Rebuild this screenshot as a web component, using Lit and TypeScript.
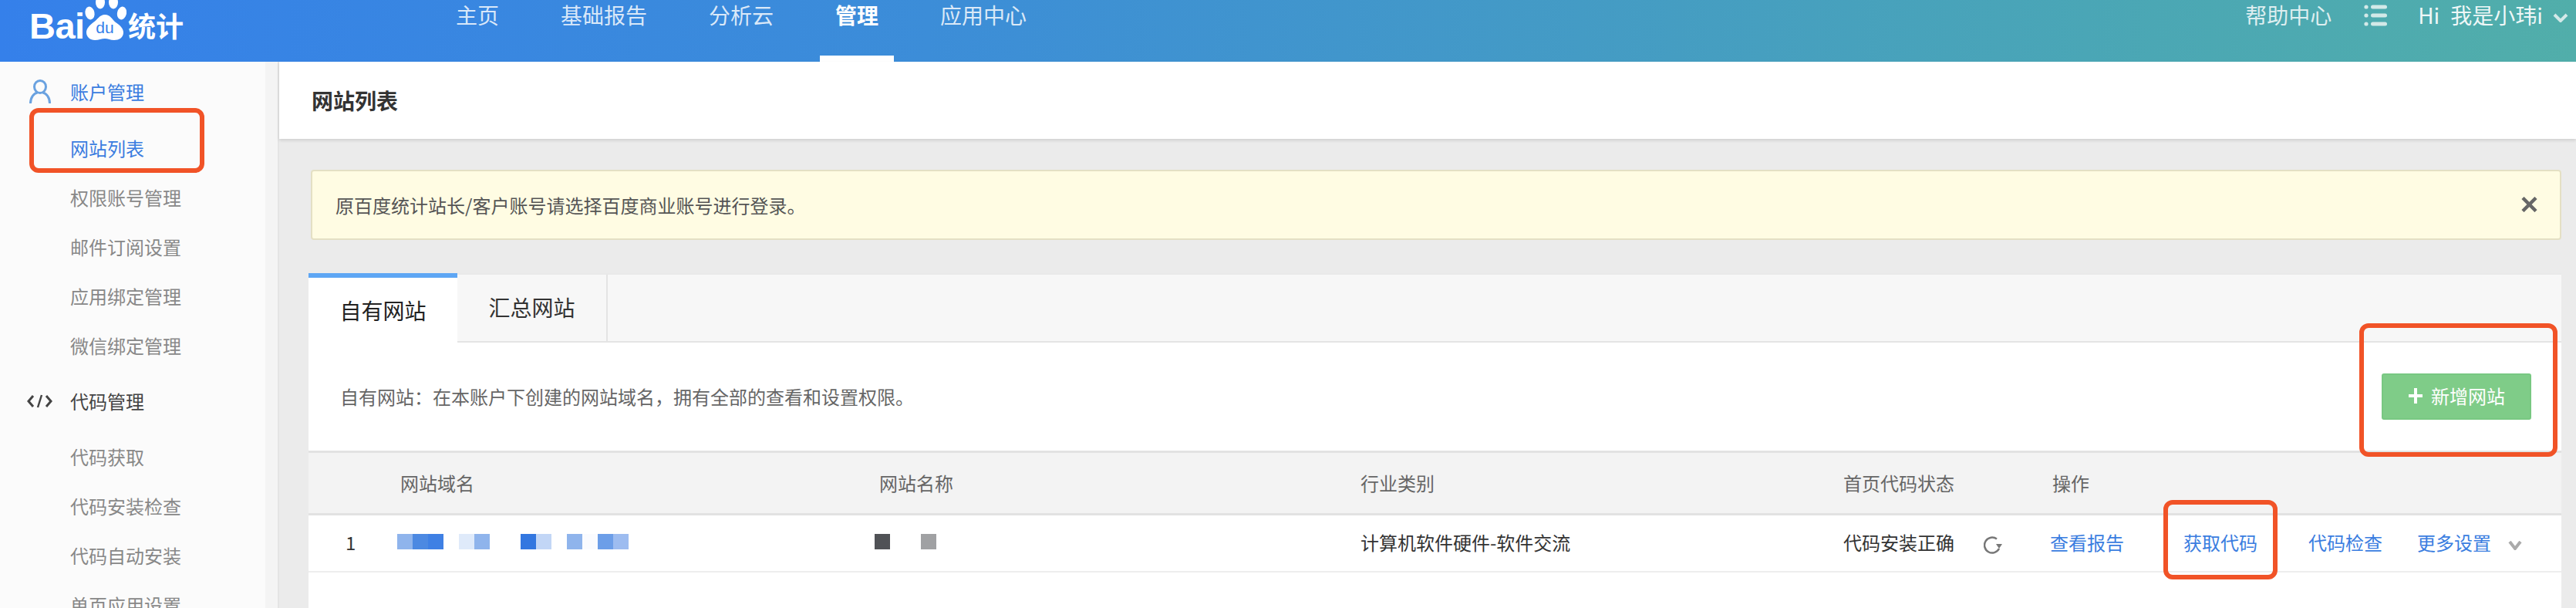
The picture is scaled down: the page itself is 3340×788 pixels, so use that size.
import { LitElement, html, css } from "lit";
import { customElement } from "lit/decorators.js";

const NAV = ["主页", "基础报告", "分析云", "管理", "应用中心"];
const GROUP_A = ["网站列表", "权限账号管理", "邮件订阅设置", "应用绑定管理", "微信绑定管理"];
const GROUP_B = ["代码获取", "代码安装检查", "代码自动安装", "单页应用设置"];
const DOMAIN = ["#8fb4ec", "#4c89e2", "#3f80e4", "", "#dfeafa", "#8fb4ec", "", "", "#3377e0", "#c2d6f6", "", "#8fb4ec", "#fafbfe", "#6c9ee8", "#9dbcf0"];
const SITE = ["#505256", "", "", "#a0a1a3"];

@customElement("app-root")
export class AppRoot extends LitElement {
  static styles = css`
    :host {
      display: block;
      position: relative;
      width: 3340px;
      height: 788px;
      overflow: hidden;
      background: #ebebeb;
      font-family: "Noto Sans CJK SC", "Liberation Sans", sans-serif;
      font-size: 24px;
      line-height: 32px;
      color: #333;
    }
    .top {
      height: 80px;
      display: flex;
      background: linear-gradient(90deg, #3580ea 0%, #3c8dd8 36%, #4aa6b6 81%, #51aeaa 100%);
      color: rgba(255, 255, 255, 0.82);
      font-size: 28px;
      line-height: 38px;
      box-sizing: border-box;
      padding-right: 10px;
    }
    .logo {
      width: 571px;
      flex: none;
      padding-left: 38px;
      box-sizing: border-box;
      display: flex;
      align-items: flex-start;
      color: #fff;
      font-weight: 700;
    }
    .bai {
      font-family: "Liberation Sans", sans-serif;
      font-size: 47px;
      line-height: 40px;
      margin-top: 14px;
      letter-spacing: -0.5px;
      width: 70px;
      white-space: nowrap;
    }
    .paw { width: 56px; height: 52px; flex: none; }
    .tong {
      font-size: 36px;
      line-height: 36px;
      margin-top: 14px;
      margin-left: 2px;
      white-space: nowrap;
    }
    .nav { display: flex; gap: 40px; }
    .nav-item {
      height: 80px;
      padding: 0 20px;
      box-sizing: border-box;
    }
    .nav-item.on {
      color: #fff;
      font-weight: 700;
      border-bottom: 8px solid #fff;
    }
    .top-right {
      margin-left: auto;
      display: flex;
      align-items: flex-start;
    }
    .list-ico { width: 30px; height: 28px; margin: 6px 40px 0 42px; }
    .hi { margin-right: 14px; color: rgba(255, 255, 255, 0.92); }
    .me { color: rgba(255, 255, 255, 0.92); }
    .top-chev { width: 20px; height: 12px; margin: 17px 0 0 13px; }

    .body { display: flex; height: 708px; }
    .side {
      width: 344px;
      flex: none;
      background: #fbfbfb;
      box-sizing: border-box;
      padding-top: 23px;
      color: #888;
    }
    .rail {
      width: 16px;
      flex: none;
      background: #f4f4f4;
      border-right: 2px solid #e4e4e4;
    }
    .head {
      display: flex;
      align-items: center;
      height: 32px;
      color: #444;
    }
    .head.blue { color: #3a7de0; }
    .head-ico { flex: none; display: flex; box-sizing: border-box; width: 91px; }
    .ico-a { padding-left: 38px; }
    .ico-b { padding-left: 35px; }
    .head-a { margin-bottom: 41px; }
    .side-item { padding-left: 91px; height: 32px; margin-bottom: 32px; }
    .side-item.blue { color: #3a7de0; }
    .head-b { margin: 40px 0 40px; }

    .main { flex: 1; min-width: 0; display: flex; flex-direction: column; }
    .title {
      height: 100px;
      flex: none;
      background: #fff;
      box-shadow: 0 2px 4px rgba(0, 0, 0, 0.12);
      display: flex;
      align-items: center;
      padding-left: 42px;
      font-size: 28px;
      font-weight: 700;
      color: #333;
    }
    .content { padding: 40px 19px 0 38px; flex: 1; display: flex; flex-direction: column; }
    .alert {
      height: 91px;
      box-sizing: border-box;
      margin-left: 3px;
      background: #fffce3;
      border: 2px solid #e4e0c4;
      border-radius: 4px;
      display: flex;
      align-items: center;
      justify-content: space-between;
      padding: 0 29px 0 30px;
      color: #555;
    }
    .close { width: 21px; height: 20px; margin-top: -2px; }
    .card {
      margin-top: 43px;
      background: #fff;
      flex: 1;
    }
    .tabs {
      height: 90px;
      box-sizing: border-box;
      display: flex;
      background: #f7f7f7;
      border-top: 2px solid #e9e9e9;
      border-bottom: 2px solid #e4e4e4;
      font-size: 28px;
      line-height: 40px;
    }
    .tab {
      width: 195px;
      box-sizing: border-box;
      padding-top: 22px;
      text-align: center;
      border-right: 2px solid #e4e4e4;
    }
    .tab.on {
      width: 193px;
      height: 90px;
      margin-top: -2px;
      padding-top: 22px;
      background: #fff;
      border-top: 6px solid #5ea6f4;
      border-right: none;
      color: #222;
    }
    .intro {
      height: 140px;
      box-sizing: border-box;
      display: flex;
      align-items: center;
      justify-content: space-between;
      padding: 0 39px 0 41px;
      color: #666;
    }
    .add {
      width: 194px;
      height: 60px;
      box-sizing: border-box;
      background: #7fcc88;
      border: 2px solid #78c882;
      border-radius: 3px;
      color: #fff;
      display: flex;
      align-items: center;
      justify-content: center;
      gap: 10px;
      padding-bottom: 2px;
    }
    .plus { width: 20px; height: 22px; }
    .grid {
      display: grid;
      grid-template-columns: 48px 67px 619px 630px 626px 268px 1fr;
      align-items: center;
    }
    .thead {
      height: 84px;
      box-sizing: border-box;
      background: #f3f3f3;
      border-top: 3px solid #e2e2e2;
      border-bottom: 3px solid #e2e2e2;
      color: #666;
    }
    .tbody {
      height: 74px;
      box-sizing: border-box;
      border-bottom: 2px solid #eeeeee;
      padding-bottom: 2px;
    }
    .pad4 { padding-left: 4px; }
    .pad6 { padding-left: 6px; }
    .pad3 { padding-left: 3px; }
    .blocks { display: flex; margin-top: -2px; }
    .blocks i { display: block; width: 20px; height: 20px; }
    .status { display: flex; align-items: center; white-space: nowrap; }
    .refresh { width: 24px; height: 24px; margin: 6px 0 0 38px; }
    .ops { display: flex; align-items: center; color: #3a7de0; white-space: nowrap; }
    .op1 { margin-right: 77px; }
    .op2 { margin-right: 66px; }
    .op3 { margin-right: 45px; }
    .op-chev { width: 18px; height: 12px; margin: 8px 0 0 22px; }
    .mark {
      position: absolute;
      box-sizing: border-box;
      border: 6px solid #f15327;
      border-radius: 12px;
    }
    .m1 { left: 38px; top: 140px; width: 227px; height: 84px; }
    .m2 { left: 3059px; top: 419px; width: 257px; height: 173px; }
    .m3 { left: 2805px; top: 648px; width: 148px; height: 103px; }
  `;

  render() {
    return html`
      <div class="top">
        <div class="logo">
          <span class="bai">Bai</span>
          <svg class="paw" viewBox="0 0 56 52">
            <g fill="#fff">
              <ellipse cx="8.5" cy="17" rx="6" ry="8.5" transform="rotate(-12 8.5 17)" />
              <ellipse cx="22" cy="3" rx="6" ry="8.5" />
              <ellipse cx="39" cy="3" rx="6" ry="8.5" />
              <ellipse cx="50" cy="17" rx="6" ry="8.5" transform="rotate(12 50 17)" />
              <path d="M28 19c7 0 9 6 14 10 6 4 10 8 10 13 0 7-6 10-12 10-5 0-8-2-12-2s-8 2-13 2c-6 0-11-4-11-10 0-5 4-9 9-13 5-3 8-10 15-10z" />
            </g>
            <text x="28" y="43" text-anchor="middle" font-family="Liberation Sans, sans-serif" font-size="21" font-weight="400" fill="#3580ea">du</text>
          </svg>
          <span class="tong">统计</span>
        </div>
        <div class="nav">
          ${NAV.map((n) => html`<div class="nav-item ${n === "管理" ? "on" : ""}">${n}</div>`)}
        </div>
        <div class="top-right">
          <span>帮助中心</span>
          <svg class="list-ico" viewBox="0 0 30 28" fill="#d3e9e8">
            <circle cx="3" cy="3" r="2.6" /><rect x="9" y="0.5" width="21" height="5" rx="2.5" />
            <circle cx="3" cy="14" r="2.6" /><rect x="9" y="11.5" width="21" height="5" rx="2.5" />
            <circle cx="3" cy="25" r="2.6" /><rect x="9" y="22.5" width="21" height="5" rx="2.5" />
          </svg>
          <span class="hi">Hi</span>
          <span class="me">我是小玮i</span>
          <svg class="top-chev" viewBox="0 0 20 12" fill="none" stroke="#d3e9e8" stroke-width="4">
            <path d="M2 2l8 8 8-8" />
          </svg>
        </div>
      </div>
      <div class="body">
        <div class="side">
          <div class="head blue head-a">
            <span class="head-ico ico-a">
              <svg width="28" height="32" viewBox="0 0 28 32" fill="none" stroke="#6aa2e0" stroke-width="3">
                <ellipse cx="14" cy="9.500" rx="7.500" ry="8" />
                <path d="M1.500 31c0-8 4.500-13 9-14M26.500 31c0-8-4.500-13-9-14" />
              </svg>
            </span>
            账户管理
          </div>
          ${GROUP_A.map((s, i) => html`<div class="side-item ${i === 0 ? "blue" : ""}">${s}</div>`)}
          <div class="head head-b">
            <span class="head-ico ico-b">
              <svg width="33" height="18" viewBox="0 0 33 18" fill="none" stroke="#444" stroke-width="3">
                <path d="M8 2L2 9l6 7M25 2l6 7-6 7" /><path d="M19 1l-5 16" stroke-width="2.500" />
              </svg>
            </span>
            代码管理
          </div>
          ${GROUP_B.map((s) => html`<div class="side-item">${s}</div>`)}
        </div>
        <div class="rail"></div>
        <div class="main">
          <div class="title">网站列表</div>
          <div class="content">
            <div class="alert">
              <span>原百度统计站长/客户账号请选择百度商业账号进行登录。</span>
              <svg class="close" viewBox="0 0 21 20" fill="none" stroke="#666" stroke-width="4.500">
                <path d="M2 1.500l17 17M19 1.500l-17 17" />
              </svg>
            </div>
            <div class="card">
              <div class="tabs">
                <div class="tab on">自有网站</div>
                <div class="tab">汇总网站</div>
              </div>
              <div class="intro">
                <span>自有网站：在本账户下创建的网站域名，拥有全部的查看和设置权限。</span>
                <div class="add">
                  <svg class="plus" viewBox="0 0 20 22" stroke="#fff" stroke-width="4">
                    <path d="M10 1v20M1 11h18" />
                  </svg>
                  <span>新增网站</span>
                </div>
              </div>
              <div class="grid thead">
                <span></span><span></span>
                <span class="pad4">网站域名</span>
                <span class="pad6">网站名称</span>
                <span>行业类别</span>
                <span>首页代码状态</span>
                <span class="pad3">操作</span>
              </div>
              <div class="grid tbody">
                <span></span>
                <span>1</span>
                <div class="blocks">${DOMAIN.map((c) => html`<i style="background:${c || "transparent"}"></i>`)}</div>
                <div class="blocks">${SITE.map((c) => html`<i style="background:${c || "transparent"}"></i>`)}</div>
                <span>计算机软件硬件-软件交流</span>
                <div class="status">
                  <span>代码安装正确</span>
                  <svg class="refresh" viewBox="0 0 24 24" fill="none" stroke="#777" stroke-width="2.500">
                    <path d="M17 4.500A10 10 0 1 0 20 17" />
                    <path d="M16 11h8l-4 6z" fill="#777" stroke="none" />
                  </svg>
                </div>
                <div class="ops">
                  <span class="op1">查看报告</span>
                  <span class="op2">获取代码</span>
                  <span class="op3">代码检查</span>
                  <span>更多设置</span>
                  <svg class="op-chev" viewBox="0 0 18 12" fill="none" stroke="#aaa" stroke-width="4">
                    <path d="M2 1l7 9 7-9" />
                  </svg>
                </div>
              </div>
            </div>
          </div>
        </div>
      </div>
      <div class="mark m1"></div>
      <div class="mark m2"></div>
      <div class="mark m3"></div>
    `;
  }
}
